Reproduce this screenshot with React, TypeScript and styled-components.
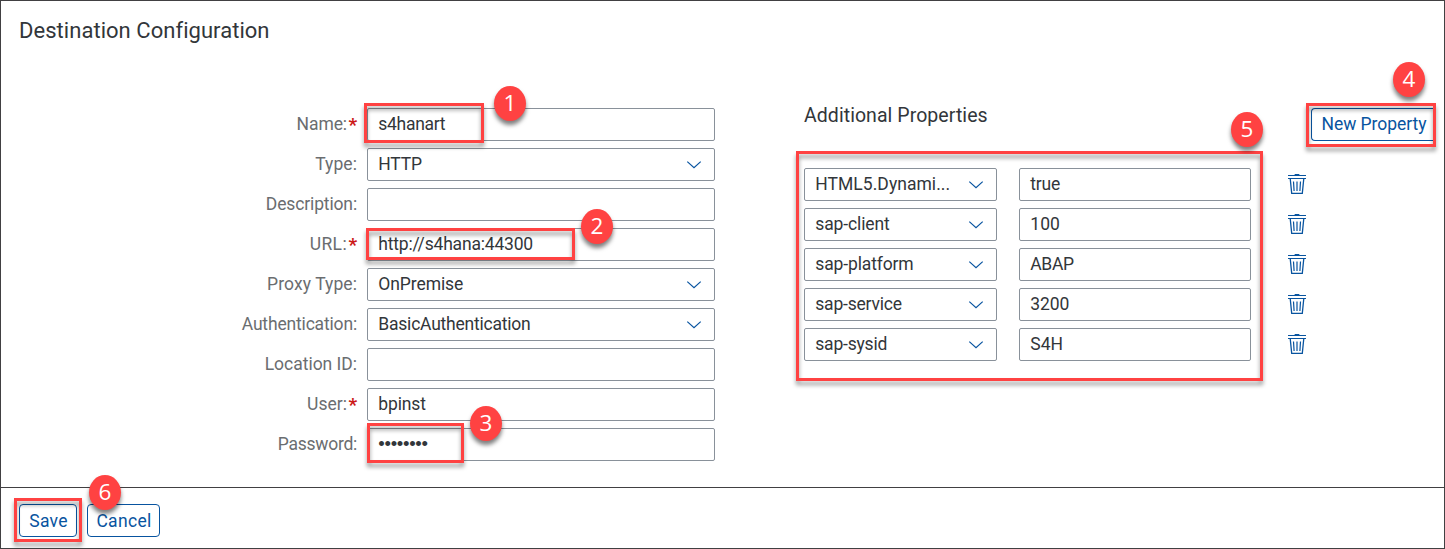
import React from "react";
import styled, { createGlobalStyle } from "styled-components";

const BLUE = "#0854a0";
const INK = "#32363a";
const RED = "#ff4242";

const GlobalStyle = createGlobalStyle`
  *, *::before, *::after { box-sizing: border-box; }
  body { margin: 0; background: #fff; }
`;

const Page = styled.div`
  position: relative;
  display: flex;
  flex-direction: column;
  width: 1445px;
  height: 549px;
  overflow: hidden;
  border: 1px solid #414042;
  background: #fff;
  color: ${INK};
  font-family: Roboto, "Liberation Sans", sans-serif;
  font-size: 17.5px;
`;

const Header = styled.header`
  height: 107px;
  padding: 14px 0 0 18px;
`;

const Title = styled.h1`
  margin: 0;
  font-size: 22px;
  font-weight: 400;
  line-height: 32px;
  letter-spacing: 0.04px;
`;

const Content = styled.main`
  display: flex;
  flex: 1;
`;

const Form = styled.form`
  display: flex;
  flex-direction: column;
  gap: 7px;
  width: 714px;
`;

const FormRow = styled.div`
  display: grid;
  grid-template-columns: 356px 348px;
  column-gap: 10px;
  height: 33px;
`;

const Label = styled.label`
  display: flex;
  justify-content: flex-end;
  color: #6a6d70;
  line-height: 32px;
  white-space: nowrap;
`;

const Required = styled.span`
  width: 10px;
  padding-left: 1.5px;
  color: #cc1919;
  font-size: 19px;
  font-weight: 700;
  line-height: 34px;
`;

const Spaced = styled.span<{ $tracking?: number }>`
  letter-spacing: ${({ $tracking = 0 }) => $tracking - 0.24}px;
`;

const Masked = styled.span`
  font-family: "Liberation Sans", sans-serif;
  font-size: 18.5px;
  letter-spacing: -0.3px;
`;

const Field = styled.div`
  display: flex;
  align-items: center;
  justify-content: space-between;
  height: 33px;
  padding: 0 12px 1px 10.3px;
  border: 1px solid #89919a;
  border-radius: 2px;
  background: #fff;
  line-height: 30px;
  white-space: nowrap;
`;

const Properties = styled.section`
  width: 503px;
  margin-left: 89px;
`;

const SectionTitle = styled.h2`
  height: 60px;
  margin: 0;
  font-size: 19.5px;
  font-weight: 400;
  line-height: 15px;
  letter-spacing: 0.06px;
`;

const PropertyList = styled.div`
  display: flex;
  flex-direction: column;
  gap: 7px;
`;

const PropertyRow = styled.div`
  display: grid;
  grid-template-columns: 193px 232px 18px;
  column-gap: 22px;

  & > :last-child { margin: 6px 0 0 15px; }
`;

const Actions = styled.div`
  padding-left: 4px;
`;

const Button = styled.button<{ $width: number; $cut?: boolean }>`
  display: flex;
  justify-content: center;
  width: ${({ $width }) => $width}px;
  height: 33px;
  padding: 0 0 0 1px;
  border: 1px solid ${BLUE};
  border-radius: 4px;
  ${({ $cut }) => $cut && "border-right: 0; border-top-right-radius: 0; border-bottom-right-radius: 0; padding-left: 3px;"}
  background: #fff;
  color: ${BLUE};
  font: inherit;
  line-height: ${({ $cut }) => ($cut ? 31 : 32)}px;
  white-space: nowrap;
`;

const Footer = styled.footer`
  display: flex;
  gap: 10px;
  height: 61px;
  padding: 16px 0 0 18px;
  border-top: 1px solid #414042;
`;

const Highlight = styled.div<{ $x: number; $y: number; $w: number; $h: number }>`
  position: absolute;
  left: ${({ $x }) => $x - 1}px;
  top: ${({ $y }) => $y - 1}px;
  width: ${({ $w }) => $w}px;
  height: ${({ $h }) => $h}px;
  border: 3px solid ${RED};
  filter: drop-shadow(0 4px 2px rgba(0, 0, 0, 0.4));
`;

const Badge = styled.div<{ $x: number; $y: number }>`
  position: absolute;
  left: ${({ $x }) => $x - 1}px;
  top: ${({ $y }) => $y - 1}px;
  width: 32px;
  height: 35px;
  border-radius: 50%;
  background: ${RED};
  box-shadow: 0 4px 4px rgba(0, 0, 0, 0.5);
  color: #fff;
  font: 22.5px/34px "Open Sans", "Noto Sans", sans-serif;
  text-align: center;
`;

const Chevron = () => (
  <svg width="16" height="10" viewBox="0 0 16 10" fill="none" stroke={BLUE} strokeWidth="1.2">
    <path d="M1.3 2.6 8 8.8l6.7-6.2" />
  </svg>
);

const Trash = () => (
  <svg width="18" height="20" viewBox="0 0 18 20" fill="none" stroke={BLUE}>
    <path d="M6.3 1 7 .1h4l.7.9H18v1H0V1z" fill={BLUE} stroke="none" />
    <path d="M0 4.5h18" />
    <path d="M2.2 4.5 3.7 19.4h10.6l1.5-14.9" strokeWidth="1.3" />
    <path d="m5.5 7.5.6 9.5M9 7.5V17m3.5-9.5-.6 9.5" strokeWidth="1.2" />
  </svg>
);

type Row = {
  label: string;
  lt: number;
  value?: string;
  vt?: number;
  required?: boolean;
  select?: boolean;
  masked?: boolean;
};

const rows: Row[] = [
  { label: "Name:", lt: 0.15, value: "s4hanart", vt: -0.05, required: true },
  { label: "Type:", lt: 0.3, value: "HTTP", vt: 0.05, select: true },
  { label: "Description:", lt: 0.1 },
  { label: "URL:", lt: 0.6, value: "http://s4hana:44300", vt: 0.05, required: true },
  { label: "Proxy Type:", lt: 0.32, value: "OnPremise", vt: 0.15, select: true },
  { label: "Authentication:", lt: 0.07, value: "BasicAuthentication", vt: 0.02, select: true },
  { label: "Location ID:", lt: 0.22 },
  { label: "User:", lt: 0.25, value: "bpinst", vt: 0.1, required: true },
  { label: "Password:", lt: -0.02, value: "••••••••", masked: true },
];

const properties = [
  { key: "HTML5.Dynami...", kt: 0.28, value: "true" },
  { key: "sap-client", kt: 0.12, value: "100", vt: 0.3 },
  { key: "sap-platform", kt: 0.1, value: "ABAP", vt: -0.1 },
  { key: "sap-service", kt: 0.03, value: "3200", vt: 0.1 },
  { key: "sap-sysid", kt: 0.03, value: "S4H", vt: 0.2 },
];

const highlights = [
  [364, 103, 120, 40],
  [366, 228, 209, 32],
  [367, 423, 97, 40],
  [1306, 103, 130, 44],
  [796, 151, 467, 230],
  [14, 498, 68, 44],
];

const badges = [
  [494, 86],
  [581, 209],
  [470, 406],
  [1393, 62],
  [1231, 112],
  [89, 475],
];

export default function App() {
  return (
    <Page>
      <GlobalStyle />
      <Header>
        <Title>Destination Configuration</Title>
      </Header>
      <Content>
        <Form>
          {rows.map((r) => (
            <FormRow key={r.label}>
              <Label>
                <Spaced $tracking={r.lt}>{r.label}</Spaced>
                {r.required && <Required>*</Required>}
              </Label>
              <Field>
                {r.masked ? <Masked>{r.value}</Masked> : <Spaced $tracking={r.vt}>{r.value}</Spaced>}
                {r.select && <Chevron />}
              </Field>
            </FormRow>
          ))}
        </Form>
        <Properties>
          <SectionTitle>Additional Properties</SectionTitle>
          <PropertyList>
            {properties.map((p) => (
              <PropertyRow key={p.key}>
                <Field>
                  <Spaced $tracking={p.kt}>{p.key}</Spaced>
                  <Chevron />
                </Field>
                <Field>
                  <Spaced $tracking={p.vt}>{p.value}</Spaced>
                </Field>
                <Trash />
              </PropertyRow>
            ))}
          </PropertyList>
        </Properties>
        <Actions>
          <Button type="button" $width={122} $cut>
            <Spaced $tracking={0.2}>New Property</Spaced>
          </Button>
        </Actions>
      </Content>
      <Footer>
        <Button type="button" $width={58}>
          <Spaced $tracking={0.5}>Save</Spaced>
        </Button>
        <Button type="button" $width={73}>
          <Spaced $tracking={0.55}>Cancel</Spaced>
        </Button>
      </Footer>
      {highlights.map(([x, y, w, h]) => (
        <Highlight key={`${x}-${y}`} $x={x} $y={y} $w={w} $h={h} />
      ))}
      {badges.map(([x, y], i) => (
        <Badge key={i} $x={x} $y={y}>
          {i + 1}
        </Badge>
      ))}
    </Page>
  );
}
